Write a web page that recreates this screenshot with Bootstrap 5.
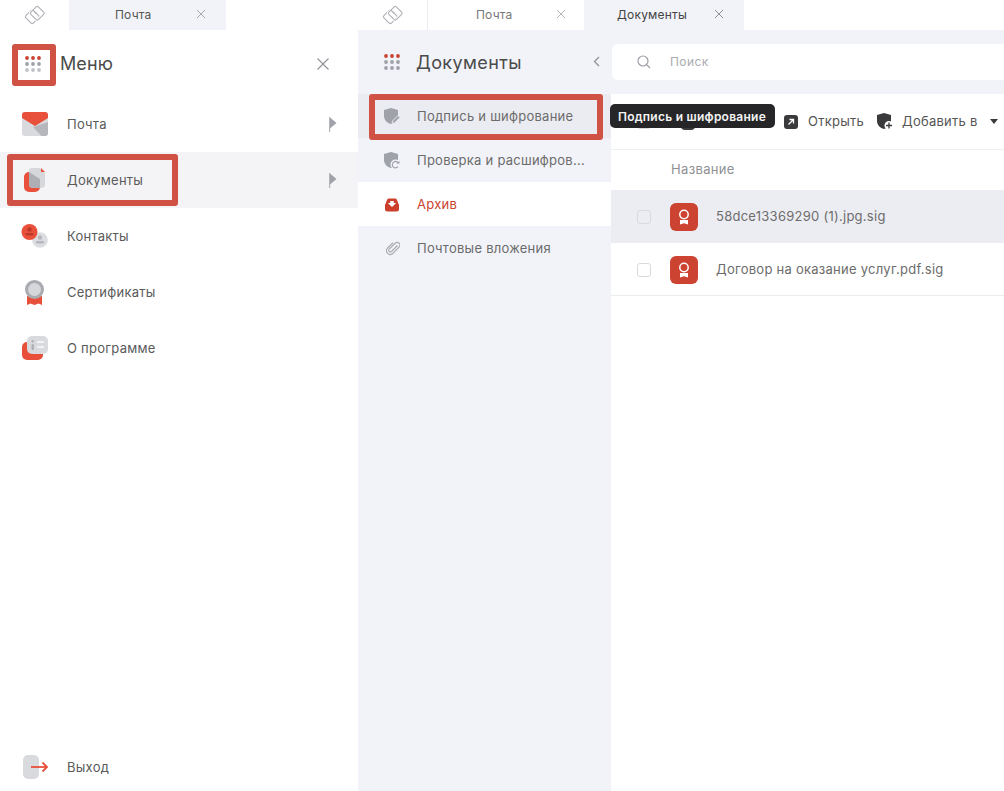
<!DOCTYPE html>
<html lang="ru"><head><meta charset="utf-8"><title>Документы</title>
<link href="https://cdn.jsdelivr.net/npm/bootstrap@5.3.0/dist/css/bootstrap.min.css" rel="stylesheet">
<style>
html,body{height:100%;overflow:hidden}
body{font-family:Inter,"Liberation Sans",sans-serif;font-size:13px;color:#5f5f5f;background:#fff}
.app-root{width:1004px;height:791px;position:relative;overflow:hidden}
.pane-left{width:358px;flex:none}
.pane-right{width:646px;flex:none;background:#f2f3f9}
.tab-strip{height:30px;background:#fff;flex:none}
.logo-cell{width:69px;height:30px}
.logo-cell.lined{border-right:1px solid #ececf0;width:70px}
.tab-item{height:30px;width:156px;font-size:12px;color:#777;padding-left:48px;position:relative;display:flex;align-items:center;letter-spacing:.2px}
.pane-left .tab-item{width:157px;padding-left:46px}
.tab-item.on{background:#f2f3f9;color:#555}
.tab-item.docs{width:160px;padding-left:33px;color:#444}
.tab-x{position:absolute;top:8px;width:12px;height:12px}
.menu-head{height:66px;padding-left:60px;font-size:18px;color:#4a4a4a;position:relative;letter-spacing:.1px}
.menu-row{height:56px;padding-left:67px;padding-top:2px;position:relative;letter-spacing:.25px;color:#5a5a5a}
.menu-row.cur{background:#f4f4f6}
.menu-ic{position:absolute;left:21px;top:50%;transform:translateY(-50%);width:28px;height:28px}
.menu-flag{position:absolute;left:329px;top:21px}
.menu-exit{margin-top:auto;margin-bottom:-4px}
.side-pane{width:253px;flex:none}
.side-head{height:64px;padding-left:58px;font-size:18px;color:#4a4a4a;position:relative;letter-spacing:.4px}
.side-row{height:44px;padding-left:59px;padding-top:2px;position:relative;letter-spacing:.25px;color:#6b6b6b;white-space:nowrap}
.side-row.hov{background:#ebecf2}
.side-row.act{background:#fff;color:#c9432f}
.side-ic{position:absolute;left:26px;top:14px}
.work-pane{flex:1;min-width:0}
.search-zone{height:64px;padding:14px 0 14px 1px}
.search-box{height:36px;background:#fff;border-radius:6px 0 0 6px;padding-left:58px;font-size:12px;color:#a9abb0;position:relative;letter-spacing:.4px}
.doc-area{background:#fff;height:697px}
.tool-bar{height:56px;border-bottom:1px solid #eeeff3;padding-left:26px;color:#555;position:relative;letter-spacing:.25px}
.tool-tick{width:14px;height:14px;border:1px solid #d9dade;border-radius:3px;margin-right:30px}
.tool-first{width:103px}
.tool-btn{gap:10px;margin-right:13px}
.tool-btn.add-btn{gap:9px;margin-right:12px}
.col-title{height:40px;padding-left:60px;color:#8e9094;letter-spacing:.35px}
.file-row{height:53px;padding-left:26px;color:#6c6c6c;letter-spacing:.26px}
.file-row.sel{background:#ecedf3}
.file-row.plain{border-bottom:1px solid #ebecf0;padding-top:1px}
.tick-box{width:14px;height:14px;border:1px solid #d9dade;border-radius:3px;background:#fff;margin-right:19px}
.file-row.sel .tick-box{background:#ecedf3}
.file-ic{width:28px;height:28px;background:#cc4331;border-radius:6px;margin-right:18px}
.red-frame{position:absolute;border:6px solid #d05245;border-radius:3px;pointer-events:none}
.frame-a{left:12px;top:44px;width:44px;height:42px}
.frame-b{left:7px;top:154px;width:171px;height:52px}
.frame-c{left:369px;top:94px;width:234px;height:46px}
.tip-box{position:absolute;left:610px;top:104px;width:165px;height:24px;background:#262628;color:#f4f4f4;border-radius:5px;font-size:12px;font-weight:600;padding-left:8px;padding-top:1px;letter-spacing:.25px}
</style></head>
<body>
<div class="app-root d-flex">
 <div class="pane-left d-flex flex-column">
  <div class="tab-strip d-flex">
   <div class="logo-cell d-flex align-items-center justify-content-center"><svg width="22" height="20" viewBox="0 0 22 20" fill="none" stroke="#aeb0b5" stroke-width="1.100"><rect x="3" y="6.500" width="10.500" height="10.500" rx="1.500" transform="rotate(45 8.250 11.750)"/><rect x="8" y="3" width="10.500" height="10.500" rx="1.500" transform="rotate(45 13.250 8.250)" stroke="#fff" stroke-width="3"/><rect x="8" y="3" width="10.500" height="10.500" rx="1.500" transform="rotate(45 13.250 8.250)"/><path d="M8.800 5.200 12.700 8.800"/></svg></div>
   <div class="tab-item on"><span>Почта</span><svg class="tab-x" style="left:126px" viewBox="0 0 12 12" stroke="#a7a9ae" fill="none"><path d="M2 2 10 10M10 2 2 10"/></svg></div>
  </div>
  <div class="menu-head d-flex align-items-center">
   <svg style="position:absolute;left:25px;top:26px" width="16" height="16" viewBox="0 0 16 16"><g fill="#c9432f"><circle cx="2" cy="2" r="1.900"/><circle cx="8" cy="2" r="1.900"/><circle cx="14" cy="2" r="1.900"/></g><g fill="#9fa1a8"><circle cx="2" cy="8" r="1.900"/><circle cx="8" cy="8" r="1.900"/><circle cx="14" cy="8" r="1.900"/></g><g fill="#c0c2c8"><circle cx="2" cy="14" r="1.900"/><circle cx="8" cy="14" r="1.900"/><circle cx="14" cy="14" r="1.900"/></g></svg>
   <span>Меню</span>
   <svg style="position:absolute;left:316px;top:27px" width="14" height="14" viewBox="0 0 14 14" stroke="#8f9197" stroke-width="1.100" fill="none"><path d="M1.500 1.500 12.500 12.500M12.500 1.500 1.500 12.500"/></svg>
  </div>
  <div class="menu-row d-flex align-items-center"><svg class="menu-ic" viewBox="0 0 28 28"><path d="M4 2h20a3 3 0 0 1 3 3v18a3 3 0 0 1-3 3H4a3 3 0 0 1-3-3V5a3 3 0 0 1 3-3z" fill="#d9dade"/><path d="M27 12v11a3 3 0 0 1-3 3h-3.500L12 17z" fill="#b5b7bc"/><path d="M4 2h20a3 3 0 0 1 3 3V8L14 16 1 8V5a3 3 0 0 1 3-3z" fill="#e9503c"/></svg><span>Почта</span><svg class="menu-flag" width="8" height="15" viewBox="0 0 8 15"><path d="M0 0h1.200v15H0z" fill="#b4b6bb"/><path d="M1 .5 7.500 6 1 11.500z" fill="#a0a2a9"/></svg></div>
  <div class="menu-row cur d-flex align-items-center"><svg class="menu-ic" viewBox="0 0 28 28"><rect x="3" y="6" width="16" height="20" rx="5" fill="#e9503c"/><path d="M11 2h8l5 5v11a4 4 0 0 1-4 4h-8a4 4 0 0 1-4-4V5a3 3 0 0 1 3-3z" fill="#d6d7da"/><path d="M8 6 19 13v9h-7a4 4 0 0 1-4-4z" fill="#adafb4"/><path d="M20 2 24 6h-4z" fill="#e9503c"/></svg><span>Документы</span><svg class="menu-flag" width="8" height="15" viewBox="0 0 8 15"><path d="M0 0h1.200v15H0z" fill="#b4b6bb"/><path d="M1 .5 7.500 6 1 11.500z" fill="#a0a2a9"/></svg></div>
  <div class="menu-row d-flex align-items-center"><svg class="menu-ic" viewBox="0 0 28 28"><circle cx="19" cy="18" r="7.800" fill="#dcdde0"/><circle cx="19" cy="15.500" r="2.200" fill="#b5b7bc"/><rect x="15" y="19" width="8" height="2.500" rx="1.200" fill="#b5b7bc"/><circle cx="8.500" cy="10" r="8" fill="#e9503c"/><circle cx="8.500" cy="7.500" r="2.300" fill="#bd3a2a"/><rect x="4.500" y="11" width="8" height="2.500" rx="1.200" fill="#bd3a2a"/></svg><span>Контакты</span></div>
  <div class="menu-row d-flex align-items-center"><svg class="menu-ic" viewBox="0 0 28 28"><path d="M6 18h15v9l-3.500-1.500L13.500 27l-4-1.500L6 27z" fill="#e9503c"/><circle cx="13.500" cy="11.500" r="9.500" fill="#a9abb1"/><circle cx="13.500" cy="11.500" r="6.500" fill="#d6d7da"/></svg><span>Сертификаты</span></div>
  <div class="menu-row d-flex align-items-center"><svg class="menu-ic" viewBox="0 0 28 28"><rect x="1" y="8" width="21" height="18" rx="5" fill="#e9503c"/><rect x="6" y="2" width="21" height="18" rx="5" fill="#d9dade"/><rect x="10.500" y="6" width="2.400" height="2.400" rx="1" fill="#aeb0b5"/><rect x="10.500" y="10" width="2.400" height="6" rx="1" fill="#aeb0b5"/><rect x="16" y="7" width="7" height="2" fill="#f2f2f4"/><rect x="16" y="12" width="7" height="2" fill="#f2f2f4"/></svg><span>О программе</span></div>
  <div class="menu-row menu-exit d-flex align-items-center"><svg class="menu-ic" viewBox="0 0 28 28"><rect x="2" y="2" width="16" height="24" rx="5" fill="#d9dade"/><path d="M10 14h15" stroke="#e9503c" stroke-width="1.800"/><path d="M21.500 9.500 26 14 21.500 18.500" stroke="#e9503c" stroke-width="1.800" fill="none"/></svg><span>Выход</span></div>
 </div>
 <div class="pane-right d-flex flex-column">
  <div class="tab-strip d-flex">
   <div class="logo-cell lined d-flex align-items-center justify-content-center"><svg width="22" height="20" viewBox="0 0 22 20" fill="none" stroke="#aeb0b5" stroke-width="1.100"><rect x="3" y="6.500" width="10.500" height="10.500" rx="1.500" transform="rotate(45 8.250 11.750)"/><rect x="8" y="3" width="10.500" height="10.500" rx="1.500" transform="rotate(45 13.250 8.250)" stroke="#fff" stroke-width="3"/><rect x="8" y="3" width="10.500" height="10.500" rx="1.500" transform="rotate(45 13.250 8.250)"/><path d="M8.800 5.200 12.700 8.800"/></svg></div>
   <div class="tab-item"><span>Почта</span><svg class="tab-x" style="left:127px" viewBox="0 0 12 12" stroke="#b4b6ba" fill="none"><path d="M2 2 10 10M10 2 2 10"/></svg></div>
   <div class="tab-item on docs"><span>Документы</span><svg class="tab-x" style="left:129px" viewBox="0 0 12 12" stroke="#8f9197" fill="none"><path d="M2 2 10 10M10 2 2 10"/></svg></div>
  </div>
  <div class="d-flex flex-grow-1">
   <div class="side-pane">
    <div class="side-head d-flex align-items-center">
     <svg style="position:absolute;left:26px;top:24px" width="17" height="17" viewBox="0 0 17 17"><g fill="#c9432f"><circle cx="2" cy="2" r="1.900"/><circle cx="8" cy="2" r="1.900"/><circle cx="14" cy="2" r="1.900"/></g><g fill="#9fa1a8"><circle cx="2" cy="8" r="1.900"/><circle cx="8" cy="8" r="1.900"/><circle cx="14" cy="8" r="1.900"/><circle cx="2" cy="14" r="1.900"/><circle cx="8" cy="14" r="1.900"/><circle cx="14" cy="14" r="1.900"/></g></svg>
     <span>Документы</span>
     <svg style="position:absolute;left:235px;top:26px" width="7" height="11" viewBox="0 0 7 11" fill="none" stroke="#8f9197" stroke-width="1.300"><path d="M6 1 1.500 5.500 6 10"/></svg>
    </div>
    <div class="side-row hov d-flex align-items-center"><svg class="side-ic" width="16" height="17" viewBox="0 0 16 17"><path d="M7 0 14 2v6c0 4-3 6.500-7 8C3 15 0 12 0 8V2z" fill="#a0a2a9"/><path d="M8.500 13 14 7.500 16 9.500 10.500 15 8 15.500z" fill="#a0a2a9" stroke="#ebecf2"/></svg><span>Подпись и шифрование</span></div>
    <div class="side-row d-flex align-items-center"><svg class="side-ic" width="16" height="17" viewBox="0 0 16 17"><path d="M7 0 14 2v6c0 4-3 6.500-7 8C3 15 0 12 0 8V2z" fill="#a0a2a9"/><circle cx="11.500" cy="12.500" r="5" fill="#f2f3f9"/><path d="M14.500 11.500a3.200 3.200 0 1 0-.5 3.200" fill="none" stroke="#a0a2a9" stroke-width="1.200"/><path d="M12.500 11.500h3v-2.500z" fill="#a0a2a9"/></svg><span>Проверка и расшифров...</span></div>
    <div class="side-row act d-flex align-items-center"><svg class="side-ic" style="left:27px;top:16px" width="14" height="14" viewBox="0 0 14 14"><path d="M4 .5h6c1 0 1.700.6 2 1.500l2 5v4a2.500 2.500 0 0 1-2.500 2.500h-9A2.500 2.500 0 0 1 0 11V7l2-5C2.300 1.100 3 .5 4 .5z" fill="#cc3f2d"/><path d="M2.800 5h2.400V3h3.600v2h2.400L7 9z" fill="#fff"/></svg><span>Архив</span></div>
    <div class="side-row d-flex align-items-center"><svg class="side-ic" style="left:28px;top:15px" width="14" height="15" viewBox="0 0 14 15" fill="none" stroke="#a9abb0" stroke-width="1.200"><path d="M11.500 4.500 5.500 10.500a1.600 1.600 0 0 1-2.300-2.300L9.500 2a2.700 2.700 0 0 1 3.800 3.800L6.500 12.800a3.800 3.800 0 0 1-5.300-5.300L7 1.800"/></svg><span>Почтовые вложения</span></div>
   </div>
   <div class="work-pane">
    <div class="search-zone"><div class="search-box d-flex align-items-center"><svg style="position:absolute;left:25px;top:11px" width="14" height="14" viewBox="0 0 14 14" fill="none" stroke="#9d9fa5" stroke-width="1.200"><circle cx="6" cy="6" r="5"/><path d="M10 10 13 13"/></svg><span>Поиск</span></div></div>
    <div class="doc-area">
     <div class="tool-bar d-flex align-items-center">
      <span class="tool-tick"></span>
      <div class="tool-first d-flex align-items-center"><svg width="14" height="16" viewBox="0 0 14 16"><rect width="14" height="16" rx="4" fill="#3a3a3c"/></svg></div>
      <div class="tool-btn d-flex align-items-center"><svg width="14" height="14" viewBox="0 0 14 14"><rect width="14" height="14" rx="3" fill="#3a3a3c"/><path d="M4.500 9.500 9 5M5.500 4.500H9.500V8.500" fill="none" stroke="#fff" stroke-width="1.300"/></svg><span>Открыть</span></div>
      <div class="tool-btn add-btn d-flex align-items-center"><svg width="16" height="17" viewBox="0 0 16 17"><path d="M7 0 14 2v6c0 4-3 6.500-7 8C3 15 0 12 0 8V2z" fill="#3a3a3c"/><circle cx="12" cy="12.500" r="4.500" fill="#fff"/><path d="M12 9.500v6M9 12.500h6" stroke="#3a3a3c" stroke-width="1.300"/></svg><span>Добавить в</span></div>
      <svg width="8" height="5" viewBox="0 0 8 5"><path d="M0 0h8L4 5z" fill="#3a3a3c"/></svg>
     </div>
     <div class="col-title d-flex align-items-center">Название</div>
     <div class="file-row sel d-flex align-items-center"><span class="tick-box"></span><span class="file-ic d-flex align-items-center justify-content-center"><svg width="12" height="16" viewBox="0 0 12 16"><circle cx="6" cy="5.500" r="4.200" fill="none" stroke="#fff" stroke-width="1.500"/><path d="M2 11h8v4.500l-4-1.300-4 1.300z" fill="#fff"/></svg></span><span>58dce13369290 (1).jpg.sig</span></div>
     <div class="file-row plain d-flex align-items-center"><span class="tick-box"></span><span class="file-ic d-flex align-items-center justify-content-center"><svg width="12" height="16" viewBox="0 0 12 16"><circle cx="6" cy="5.500" r="4.200" fill="none" stroke="#fff" stroke-width="1.500"/><path d="M2 11h8v4.500l-4-1.300-4 1.300z" fill="#fff"/></svg></span><span>Договор на оказание услуг.pdf.sig</span></div>
    </div>
   </div>
  </div>
 </div>
 <div class="red-frame frame-a"></div>
 <div class="red-frame frame-b"></div>
 <div class="red-frame frame-c"></div>
 <div class="tip-box d-flex align-items-center">Подпись и шифрование</div>
</div>
<script src="https://cdn.jsdelivr.net/npm/bootstrap@5.3.0/dist/js/bootstrap.bundle.min.js"></script>
</body></html>
